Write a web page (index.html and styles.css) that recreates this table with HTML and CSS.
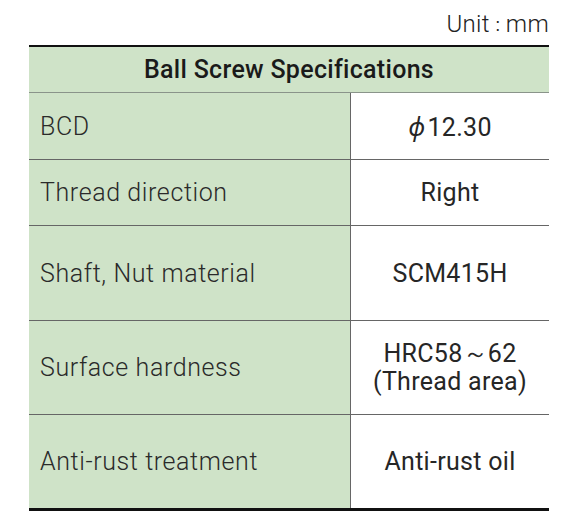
FILE: index.html
```html
<!DOCTYPE html>
<html>
<head>
<meta charset="utf-8">
<link rel="stylesheet" href="styles.css">
</head>
<body>
<div class="page">
  <div class="unit">Unit<span class="colon">：</span>mm</div>
  <table class="spec">
    <thead>
      <tr><th colspan="2" class="head">Ball Screw Specifications</th></tr>
    </thead>
    <tbody>
      <tr class="r1"><td class="label">BCD</td><td class="value"><span class="phi">ϕ</span>12.30</td></tr>
      <tr class="r2"><td class="label">Thread direction</td><td class="value">Right</td></tr>
      <tr class="r3"><td class="label">Shaft, Nut material</td><td class="value">SCM415H</td></tr>
      <tr class="r4"><td class="label">Surface hardness</td><td class="value two">HRC58～62<br>(Thread area)</td></tr>
      <tr class="r5"><td class="label">Anti-rust treatment</td><td class="value">Anti-rust oil</td></tr>
    </tbody>
  </table>
</div>
</body>
</html>
```

FILE: styles.css
```css
html, body {
  margin: 0;
  padding: 0;
  background: #ffffff;
}
.page {
  width: 520px;
  padding: 9px 16px 0 29px;
  font-family: Roboto, "Noto Sans", sans-serif;
  color: #222;
}
.unit {
  text-align: right;
  font-size: 24px;
  font-weight: 300;
  line-height: 30px;
  height: 36px;
  letter-spacing: 0.3px;
}
.colon {
  font-family: "Noto Sans CJK JP", sans-serif;
  font-size: 16px;
  letter-spacing: 0;
}
.spec {
  width: 520px;
  border-collapse: collapse;
  border-top: 2px solid #111;
  border-bottom: 3px solid #111;
}
.head {
  background: #cfe3c8;
  height: 45px;
  padding: 0;
  font-size: 25px;
  font-weight: 500;
  text-align: center;
  border-bottom: 1.5px solid #8a948a;
  letter-spacing: 0.3px;
  color: #1a1a1a;
}
td {
  padding: 0;
  font-size: 25px;
  border-bottom: 1px solid #666;
}
tbody tr:last-child td {
  border-bottom: none;
}
.label {
  width: 310px;
  background: #cfe3c8;
  padding-left: 11px;
  font-weight: 300;
  border-right: 1px solid #666;
  letter-spacing: 0.6px;
  color: #2a2a2a;
}
.value {
  text-align: center;
  font-weight: 400;
  letter-spacing: 0.3px;
  color: #262626;
}
.two {
  line-height: 28px;
}
.phi {
  font-style: italic;
  margin-right: 2px;
}
.r1 td { height: 66px; }
.r2 td { height: 65px; }
.r3 td { height: 94px; }
.r4 td { height: 93px; }
.r5 td { height: 93px; }
```
